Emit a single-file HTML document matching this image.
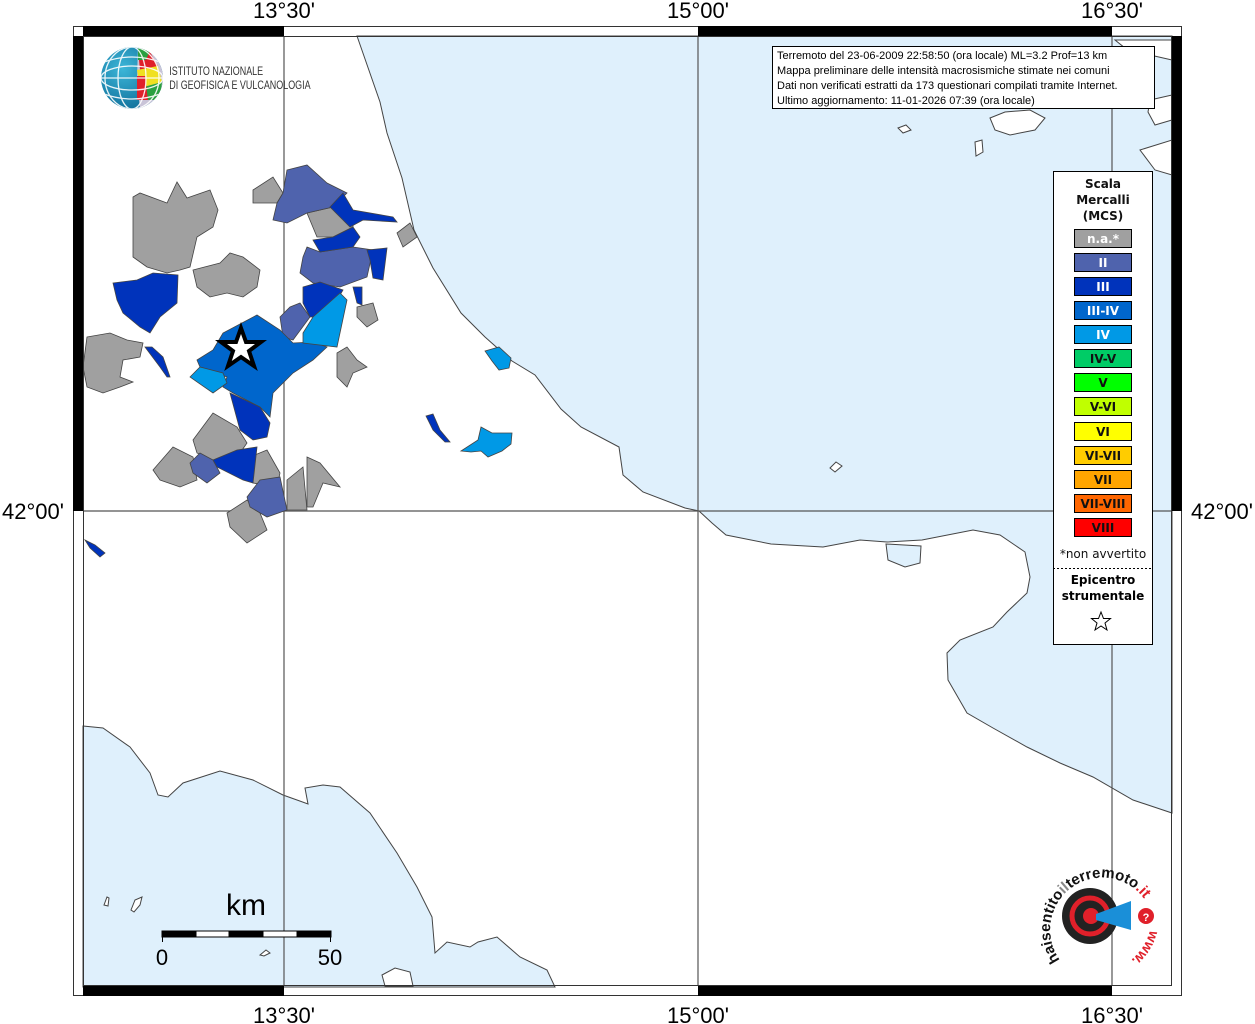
<!DOCTYPE html>
<html><head><meta charset="utf-8"><style>
html,body{margin:0;padding:0;background:#fff;}
svg{display:block;}
text{font-family:"Liberation Sans",sans-serif;}
.lg{font-family:"DejaVu Sans","Liberation Sans",sans-serif;font-weight:bold;font-size:12px;text-anchor:middle;}
</style></head><body>
<svg width="1255" height="1024" viewBox="0 0 1255 1024" xmlns="http://www.w3.org/2000/svg">
<rect width="1255" height="1024" fill="#fff"/>
<g fill="#dff0fc" stroke="#444" stroke-width="1">
<polygon points="357,36 380,102 387,133 402,178 414,230 433,268 461,313 485,337 512,361 535,375 561,409 581,427 619,447 623,475 643,492 685,508 699,511 712,523 726,535 771,544 823,547 860,540 887,542 922,540 973,530 1000,535 1025,552 1030,577 1027,593 1007,612 993,627 960,640 947,653 948,680 967,713 993,728 1027,747 1060,763 1093,777 1133,800 1172,813 1172,36"/>
<polygon points="83,726 103,728 130,747 150,773 158,795 168,797 183,783 220,771 253,780 283,795 297,800 308,804 305,788 323,785 340,787 370,813 397,853 417,887 432,917 435,953 447,942 470,947 478,942 497,937 520,957 547,970 555,987 83,987"/>
</g>
<g fill="#fff" stroke="#444" stroke-width="1">
<polygon points="382,975 395,968 410,972 413,986 385,986"/>
<polygon points="131,910 135,900 142,897 140,905 134,912"/>
<polygon points="104,905 107,897 109,898 108,906"/>
<polygon points="260,955 266,950 270,953 264,956"/>
<polygon points="1115,40 1172,40 1172,60 1150,55 1125,48"/>
<polygon points="1150,100 1172,95 1172,120 1155,125 1148,112"/>
<polygon points="1140,150 1172,140 1172,175 1155,170"/>
<polygon points="990,118 1005,112 1030,110 1045,118 1035,130 1010,135 995,130"/>
<polygon points="898,128 906,125 911,130 903,133"/>
<polygon points="975,142 982,140 983,152 976,156"/>
<polygon points="830,468 836,462 842,466 835,472"/>
</g>
<g fill="#dff0fc" stroke="#444" stroke-width="1"><polygon points="886,544 921,546 920,563 905,567 888,560"/></g>
<g stroke="#555" stroke-width="1.2">
<line x1="284" y1="36" x2="284" y2="986"/><line x1="698" y1="36" x2="698" y2="986"/><line x1="1112" y1="36" x2="1112" y2="986"/>
<line x1="83" y1="511" x2="1172" y2="511"/>
</g>
<g stroke="#444" stroke-width="0.8">
<g fill="#a0a0a0">
<polygon points="133,197 140,193 167,203 177,182 187,198 210,190 218,210 213,227 197,237 190,267 180,270 167,273 147,267 133,257 133,227"/>
<polygon points="193,270 220,263 230,253 243,257 260,270 257,287 243,297 227,293 210,297 197,287"/>
<polygon points="87,337 110,333 127,340 143,343 140,357 123,360 120,377 133,382 120,387 103,393 87,387 83,367"/>
<polygon points="193,440 213,413 237,427 247,443 240,453 213,460 197,453"/>
<polygon points="153,470 173,447 193,457 197,480 180,487 160,480"/>
<polygon points="250,457 267,450 280,473 277,487 253,483"/>
<polygon points="227,513 247,500 260,513 267,530 247,543 230,527"/>
<polygon points="287,480 303,467 307,510 287,510"/>
<polygon points="307,457 320,463 340,487 323,483 313,507 307,507"/>
<polygon points="253,190 273,177 283,193 277,203 253,203"/>
<polygon points="307,213 333,207 353,217 353,227 333,237 317,237"/>
<polygon points="357,307 373,303 378,320 367,327 357,317"/>
<polygon points="397,233 410,223 417,237 403,247"/>
<polygon points="337,353 347,347 357,360 367,367 353,373 347,387 337,377"/>
</g>
<g fill="#4f63ad">
<polygon points="287,170 307,165 327,183 347,193 333,207 307,213 287,223 273,220 277,203 283,193"/>
<polygon points="307,247 320,252 353,247 373,250 367,277 340,287 313,283 300,273 303,257"/>
<polygon points="190,463 200,453 213,460 220,473 207,483 193,473"/>
<polygon points="247,497 260,480 280,477 287,510 267,517 250,507"/>
<polygon points="280,317 290,307 300,303 310,317 293,340 283,337"/>
</g>
<g fill="#0033bb">
<polygon points="113,283 137,280 153,273 178,275 177,303 160,317 150,333 140,327 123,313 117,300"/>
<polygon points="145,347 152,347 163,357 170,377 167,377 160,367"/>
<polygon points="230,393 260,407 270,423 267,437 253,440 240,430"/>
<polygon points="213,460 237,450 257,447 253,483 243,480 217,467"/>
<polygon points="330,207 343,193 353,210 393,217 397,222 363,220 350,227"/>
<polygon points="313,240 333,237 353,227 360,237 353,247 320,252"/>
<polygon points="367,250 387,248 383,280 373,278 370,260"/>
<polygon points="303,287 320,282 343,290 333,307 320,317 310,317 303,303"/>
<polygon points="353,287 362,287 362,305 357,303"/>
<polygon points="426,416 433,414 440,430 450,442 445,442 433,430"/>
<polygon points="85,540 95,545 105,553 100,557 90,548"/>
</g>
<g fill="#0066cc">
<polygon points="197,360 213,350 223,333 257,315 280,330 293,343 313,342 327,347 313,360 293,373 283,383 273,393 270,417 260,407 233,393 223,387 227,377 200,367"/>
</g>
<g fill="#0099e6">
<polygon points="190,377 200,367 223,373 227,383 213,393"/>
<polygon points="303,333 313,317 340,293 347,300 337,347 303,343"/>
<polygon points="485,351 499,347 511,358 509,368 499,370 492,361"/>
<polygon points="461,451 478,440 481,427 492,433 512,433 511,444 502,451 488,457 481,451 471,452"/>
</g>
</g>
<polygon points="241,328 246,342 261,342 249,351 254,366 241,357 228,366 233,351 221,342 236,342" fill="#fff" stroke="#000" stroke-width="4" stroke-linejoin="miter"/>
<g stroke="#333" stroke-width="1">
<rect x="73.5" y="26.5" width="1108" height="969" fill="none"/>
<rect x="83.5" y="36.5" width="1088" height="949" fill="none"/>
</g>
<g fill="#000">
<rect x="83" y="26" width="201" height="10"/><rect x="698" y="26" width="414" height="10"/>
<rect x="83" y="986" width="201" height="10"/><rect x="698" y="986" width="414" height="10"/>
<rect x="73" y="36" width="10" height="475"/><rect x="1172" y="36" width="10" height="475"/>
</g>
<g font-size="22" fill="#000" text-anchor="middle">
<text x="284" y="18">13°30'</text><text x="698" y="18">15°00'</text><text x="1112" y="18">16°30'</text>
<text x="284" y="1023">13°30'</text><text x="698" y="1023">15°00'</text><text x="1112" y="1023">16°30'</text>
<text x="33" y="519">42°00'</text><text x="1222" y="519">42°00'</text>
</g>
<rect x="772.5" y="46.5" width="382" height="62" fill="#fff" stroke="#000"/>
<g font-size="11" fill="#000">
<text x="777" y="59">Terremoto del 23-06-2009 22:58:50 (ora locale) ML=3.2 Prof=13 km</text>
<text x="777" y="74">Mappa preliminare delle intensità macrosismiche stimate nei comuni</text>
<text x="777" y="89">Dati non verificati estratti da 173 questionari compilati tramite Internet.</text>
<text x="777" y="104">Ultimo aggiornamento: 11-01-2026 07:39 (ora locale)</text>
</g>
<rect x="1053.5" y="171.5" width="99" height="473" fill="#fff" stroke="#000"/>
<g fill="#111">
<text x="1103" y="188" class="lg">Scala</text><text x="1103" y="204" class="lg">Mercalli</text><text x="1103" y="220" class="lg">(MCS)</text>
</g>
<g stroke="#000" stroke-width="1">
<rect x="1074.5" y="229.5" width="57" height="18" fill="#a0a0a0"/>
<rect x="1074.5" y="253.5" width="57" height="18" fill="#4f63ad"/>
<rect x="1074.5" y="277.5" width="57" height="18" fill="#0033bb"/>
<rect x="1074.5" y="301.5" width="57" height="18" fill="#0066cc"/>
<rect x="1074.5" y="325.5" width="57" height="18" fill="#0099e6"/>
<rect x="1074.5" y="349.5" width="57" height="18" fill="#00cc66"/>
<rect x="1074.5" y="373.5" width="57" height="18" fill="#00ff00"/>
<rect x="1074.5" y="397.5" width="57" height="18" fill="#c0ff00"/>
<rect x="1074.5" y="422.5" width="57" height="18" fill="#ffff00"/>
<rect x="1074.5" y="446.5" width="57" height="18" fill="#ffcc00"/>
<rect x="1074.5" y="470.5" width="57" height="18" fill="#ffa500"/>
<rect x="1074.5" y="494.5" width="57" height="18" fill="#ff6600"/>
<rect x="1074.5" y="518.5" width="57" height="18" fill="#ff0000"/>
</g>
<text x="1103" y="243" fill="#fff" class="lg">n.a.*</text>
<text x="1103" y="267" fill="#fff" class="lg">II</text>
<text x="1103" y="291" fill="#fff" class="lg">III</text>
<text x="1103" y="315" fill="#fff" class="lg">III-IV</text>
<text x="1103" y="339" fill="#fff" class="lg">IV</text>
<text x="1103" y="363" fill="#111" class="lg">IV-V</text>
<text x="1103" y="387" fill="#111" class="lg">V</text>
<text x="1103" y="411" fill="#111" class="lg">V-VI</text>
<text x="1103" y="436" fill="#111" class="lg">VI</text>
<text x="1103" y="460" fill="#111" class="lg">VI-VII</text>
<text x="1103" y="484" fill="#111" class="lg">VII</text>
<text x="1103" y="508" fill="#111" class="lg">VII-VIII</text>
<text x="1103" y="532" fill="#111" class="lg">VIII</text>
<text x="1103" y="558" text-anchor="middle" font-size="12" fill="#111" style="font-family:'DejaVu Sans',sans-serif">*non avvertito</text>
<line x1="1053" y1="568.5" x2="1152" y2="568.5" stroke="#000" stroke-dasharray="2,2"/>
<text x="1103" y="584" class="lg">Epicentro</text><text x="1103" y="600" class="lg">strumentale</text>
<polygon points="1101,612 1103.5,618.5 1110.5,618.5 1105,623 1107,630 1101,626 1095,630 1097,623 1091.5,618.5 1098.5,618.5" fill="#fff" stroke="#000" stroke-width="1"/>
<text x="246" y="915" font-size="30" text-anchor="middle">km</text>
<g stroke="#000" stroke-width="1">
<rect x="162" y="931" width="34" height="6" fill="#000"/>
<rect x="196" y="931" width="33" height="6" fill="#fff"/>
<rect x="229" y="931" width="34" height="6" fill="#000"/>
<rect x="263" y="931" width="34" height="6" fill="#fff"/>
<rect x="297" y="931" width="34" height="6" fill="#000"/>
<line x1="162.5" y1="931" x2="162.5" y2="942"/><line x1="330.5" y1="931" x2="330.5" y2="942"/>
</g>
<text x="162" y="965" font-size="22" text-anchor="middle">0</text>
<text x="330" y="965" font-size="22" text-anchor="middle">50</text>
<defs>
<radialGradient id="gb" cx="0.35" cy="0.35" r="0.7"><stop offset="0" stop-color="#3cb6d8"/><stop offset="1" stop-color="#0f6f9a"/></radialGradient>
<clipPath id="gc"><circle cx="132" cy="78" r="31"/></clipPath>
</defs>
<circle cx="132" cy="78" r="31" fill="url(#gb)"/>
<g clip-path="url(#gc)">
<polygon points="138,46 170,46 170,110 140,110 137,78" fill="#c9c4d8"/>
<polygon points="138,50 150,52 158,66 140,70" fill="#e0202a"/>
<polygon points="137,70 158,66 162,82 140,88" fill="#f0e020"/>
<polygon points="140,88 162,82 160,100 140,100" fill="#2aa040"/>
<polygon points="137,76 145,76 148,100 137,100" fill="#e0202a"/>
<polygon points="138,48 150,50 146,60 138,60" fill="#2aa040"/>
<g fill="none" stroke="#fff" stroke-width="1.3" opacity="0.9">
<ellipse cx="132" cy="78" rx="14" ry="31"/><ellipse cx="132" cy="78" rx="27" ry="31"/>
<ellipse cx="132" cy="78" rx="31" ry="12"/><line x1="101" y1="78" x2="163" y2="78"/>
<path d="M104,62 Q132,52 160,62"/><path d="M104,94 Q132,104 160,94"/>
</g>
</g>
<g fill="#333" font-size="11.5" transform="scale(0.78,1)">
<text x="217" y="75">ISTITUTO NAZIONALE</text>
<text x="217" y="89">DI GEOFISICA E VULCANOLOGIA</text>
</g>
<defs>
<path id="arc" d="M1060,960 A52,52 0 1,1 1148,905"/>
<path id="arc2" d="M1150,930 A55,55 0 0,1 1095,972"/>
</defs>
<circle cx="1090" cy="916" r="28" fill="#222"/>
<circle cx="1090" cy="916" r="18" fill="none" stroke="#e0202a" stroke-width="5"/>
<circle cx="1091" cy="916" r="8" fill="#e0202a"/>
<polygon points="1096,914 1131,901 1131,930 1096,920" fill="#1a8fd8"/>
<circle cx="1146" cy="916" r="8" fill="#e0202a"/>
<text x="1146" y="921" font-size="11" font-weight="bold" fill="#fff" text-anchor="middle">?</text>
<text font-size="15" font-weight="bold" fill="#111"><textPath href="#arc">haisentito<tspan fill="#888">il</tspan>terremoto<tspan fill="#e0202a">.it</tspan></textPath></text>
<text font-size="14" font-weight="bold" fill="#e0202a"><textPath href="#arc2">www.</textPath></text>
</svg>
</body></html>
